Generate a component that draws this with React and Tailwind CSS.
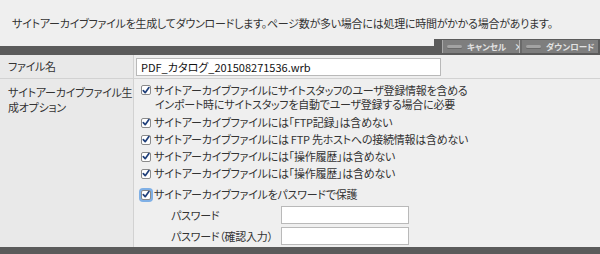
import React from "react";

function Check({ focus }) {
  return (
    <span
      className={
        "inline-flex shrink-0 w-[10px] h-[10px] mr-[3px] rounded-[2px] border border-[#8a8a8a] bg-white items-center justify-center " +
        (focus ? "shadow-[0_0_0_2px_#7fb0e6]" : "")
      }
    >
      <svg width="9" height="9" viewBox="0 0 9 9">
        <path d="M1.5 4.6 L3.6 7 L7.8 1.2" fill="none" stroke="#1f3f7a" strokeWidth="1.9" strokeLinecap="round" strokeLinejoin="round" />
      </svg>
    </span>
  );
}

function Pill() {
  return <span className="inline-block shrink-0 w-[15px] h-[3px] rounded-full bg-[#a3a3a3] shadow-[0_1px_0_#6a6a6a]" />;
}

function Item({ children, className = "", focus }) {
  return (
    <div className={"flex items-center leading-[13px] whitespace-nowrap " + className}>
      <Check focus={focus} />
      <span>{children}</span>
    </div>
  );
}

export default function App() {
  return (
    <div className="w-[600px] h-[254px] overflow-hidden bg-[#efefef] text-[#333] text-[11px] tracking-[-0.25px] [font-family:'Noto_Sans_CJK_JP','Noto_Sans',sans-serif] [font-feature-settings:'palt']">
      <div className="h-[46px] pl-[12px] pt-[15px] leading-[16px] whitespace-nowrap">
        サイトアーカイブファイルを生成してダウンロードします。ページ数が多い場合には処理に時間がかかる場合があります。
      </div>
      <div className="h-[9px] bg-[#5b5b5b] flex justify-end">
        <div className="-mt-[7px] h-[16px] w-[166px] bg-[#5b5b5b] pl-[8px] pr-[2px] pt-[1px] flex tracking-normal">
          <div className="flex items-center h-[13px] w-[77px] bg-[#7e7e7e] border-l border-[#a9a9a9] pl-[4px] gap-[5px] text-[8.5px] font-bold text-[#e2e2e2] leading-none whitespace-nowrap">
            <Pill />
            <span>キャンセル</span>
            <span className="ml-[3px] text-[9px]">×</span>
          </div>
          <div className="w-[3px] h-[13px] bg-[#6a6a6a] border-l border-[#b4b4b4]" />
          <div className="flex items-center h-[13px] flex-1 bg-[#7e7e7e] pl-[4px] gap-[5px] text-[8.5px] font-bold text-[#e2e2e2] leading-none whitespace-nowrap">
            <Pill />
            <span>ダウンロード</span>
          </div>
        </div>
      </div>
      <div className="flex h-[24px] border-b border-[#d2d2d2]">
        <div className="w-[134px] shrink-0 bg-[#e9e9e9] border-r border-[#d2d2d2] pl-[8px] flex items-center">ファイル名</div>
        <div className="pl-[2px] pt-[3px]">
          <div className="w-[305px] h-[18px] bg-white border border-[#b9b9b9] pl-[4px] text-[11px] text-[#111] leading-[16px] tracking-normal">
            PDF_カタログ_201508271536.wrb
          </div>
        </div>
      </div>
      <div className="flex h-[168px]">
        <div className="w-[134px] shrink-0 bg-[#e9e9e9] border-r border-[#d2d2d2] pl-[8px] pt-[6px] leading-[15px] whitespace-nowrap">
          サイトアーカイブファイル生
          <br />
          成オプション
        </div>
        <div className="pl-[7px] pt-[4px]">
          <div className="leading-[14px] whitespace-nowrap">
            <div className="flex items-center">
              <Check />
              <span>サイトアーカイブファイルにサイトスタッフのユーザ登録情報を含める</span>
            </div>
            <div className="pl-[14px]">インポート時にサイトスタッフを自動でユーザ登録する場合に必要</div>
          </div>
          <Item className="mt-[5px]">サイトアーカイブファイルには「FTP記録」は含めない</Item>
          <Item className="mt-[4px]">サイトアーカイブファイルには FTP 先ホストへの接続情報は含めない</Item>
          <Item className="mt-[4px]">サイトアーカイブファイルには「操作履歴」は含めない</Item>
          <Item className="mt-[4px]">サイトアーカイブファイルには「操作履歴」は含めない</Item>
          <Item className="mt-[8px]" focus>サイトアーカイブファイルをパスワードで保護</Item>
          <div className="mt-[5px] flex items-center pl-[30px]">
            <span className="w-[110px] whitespace-nowrap">パスワード</span>
            <div className="w-[128px] h-[18px] bg-white border border-[#b9b9b9]" />
          </div>
          <div className="mt-[3px] flex items-center pl-[30px]">
            <span className="w-[110px] whitespace-nowrap">パスワード（確認入力）</span>
            <div className="w-[128px] h-[18px] bg-white border border-[#b9b9b9]" />
          </div>
        </div>
      </div>
      <div className="h-[8px] bg-[#5b5b5b]" />
    </div>
  );
}
